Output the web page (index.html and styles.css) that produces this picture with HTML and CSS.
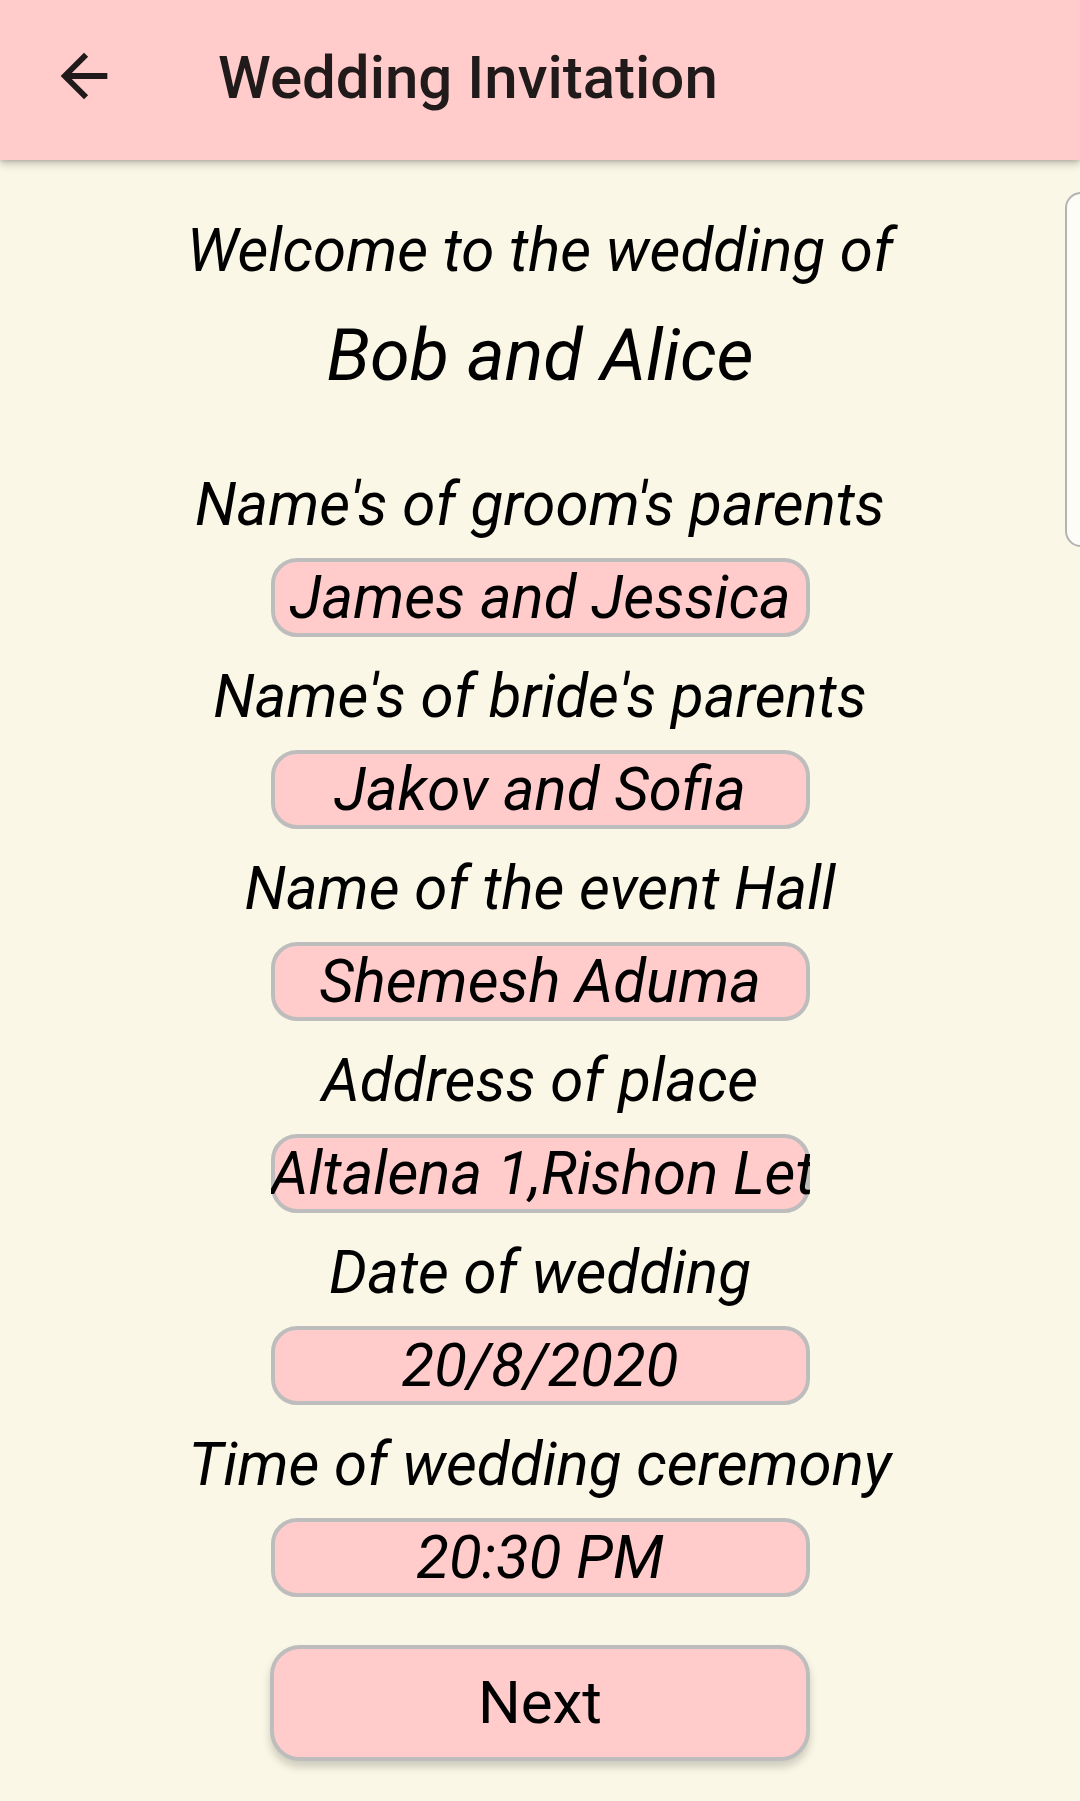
FILE: index.html
```html
<!DOCTYPE html>
<html lang="en">
<head>
<meta charset="utf-8">
<title>Wedding Invitation</title>
<link rel="stylesheet" href="styles.css">
</head>
<body>
<header class="appbar">
  <svg class="back" viewBox="0 0 24 24" width="70" height="70" aria-hidden="true">
    <path d="M20 11H7.83l5.59-5.59L12 4l-8 8 8 8 1.41-1.41L7.83 13H20v-2z"/>
  </svg>
  <h1 class="title">Wedding Invitation</h1>
</header>

<main class="content">
  <p class="welcome">Welcome to the wedding of</p>
  <p class="couple">Bob and Alice</p>

  <p class="label label-first">Name's of groom's parents</p>
  <div class="field"><span class="field-text">James and Jessica</span></div>

  <p class="label">Name's of bride's parents</p>
  <div class="field"><span class="field-text">Jakov and Sofia</span></div>

  <p class="label">Name of the event Hall</p>
  <div class="field"><span class="field-text">Shemesh Aduma</span></div>

  <p class="label">Address of place</p>
  <div class="field field-overflow"><span class="field-text">Altalena 1,Rishon Letzion</span></div>

  <p class="label">Date of wedding</p>
  <div class="field"><span class="field-text">20/8/2020</span></div>

  <p class="label">Time of wedding ceremony</p>
  <div class="field"><span class="field-text">20:30 PM</span></div>

  <button class="next" type="button">Next</button>
</main>

<div class="edge-handle" aria-hidden="true"></div>
</body>
</html>
```

FILE: styles.css
```css
html, body {
  margin: 0;
  padding: 0;
}

body {
  width: 1080px;
  height: 1801px;
  background: #faf7e6;
  font-family: Roboto, "Noto Sans", "Liberation Sans", sans-serif;
  color: #000;
  overflow: hidden;
  position: relative;
}

.appbar {
  height: 160px;
  box-sizing: border-box;
  background: #ffcccb;
  display: flex;
  align-items: flex-start;
  padding: 41px 0 0 49px;
  box-shadow: 0 4px 8px rgba(0, 0, 0, 0.22), 0 1px 3px rgba(0, 0, 0, 0.12);
  position: relative;
  z-index: 2;
}

.back {
  display: block;
  flex: none;
  fill: #211a1a;
}

.title {
  margin: 2px 0 0 99px;
  font-size: 60px;
  font-weight: 500;
  line-height: 70px;
  color: #211a1a;
}

.content {
  display: flex;
  flex-direction: column;
  align-items: center;
  padding-top: 56px;
}

.welcome {
  margin: 0;
  font-size: 60px;
  font-style: italic;
  line-height: 70px;
}

.couple {
  margin: 28px 0 0;
  font-size: 72px;
  font-style: italic;
  line-height: 84px;
}

.label {
  margin: 25px 0 18px;
  font-size: 60px;
  font-style: italic;
  line-height: 70px;
  white-space: nowrap;
}

.label-first {
  margin-top: 72px;
}

.field {
  position: relative;
  width: 539px;
  height: 79px;
  box-sizing: border-box;
  padding-top: 4px;
  overflow: hidden;
  text-align: center;
  white-space: nowrap;
}

.field::before {
  content: "";
  position: absolute;
  inset: 0;
  background: #ffcccb;
  border: 4px solid #bdbdbd;
  border-radius: 26px;
}

.field-text {
  position: relative;
  font-size: 60px;
  font-style: italic;
  line-height: 71px;
}

.field-overflow {
  text-align: left;
  padding-left: 0;
}

.next {
  margin-top: 48px;
  width: 540px;
  height: 116px;
  background: #ffcccb;
  border: 4px solid #bdbdbd;
  border-radius: 30px;
  font-family: Roboto, "Noto Sans", "Liberation Sans", sans-serif;
  font-size: 60px;
  line-height: 70px;
  color: #000;
  padding: 0;
  box-shadow: 0 6px 8px rgba(0, 0, 0, 0.18);
}

.edge-handle {
  position: absolute;
  left: 1065px;
  top: 192px;
  width: 40px;
  height: 355px;
  box-sizing: border-box;
  background: #fdfcf7;
  border: 2px solid #b3b3b3;
  border-radius: 16px;
}
```
